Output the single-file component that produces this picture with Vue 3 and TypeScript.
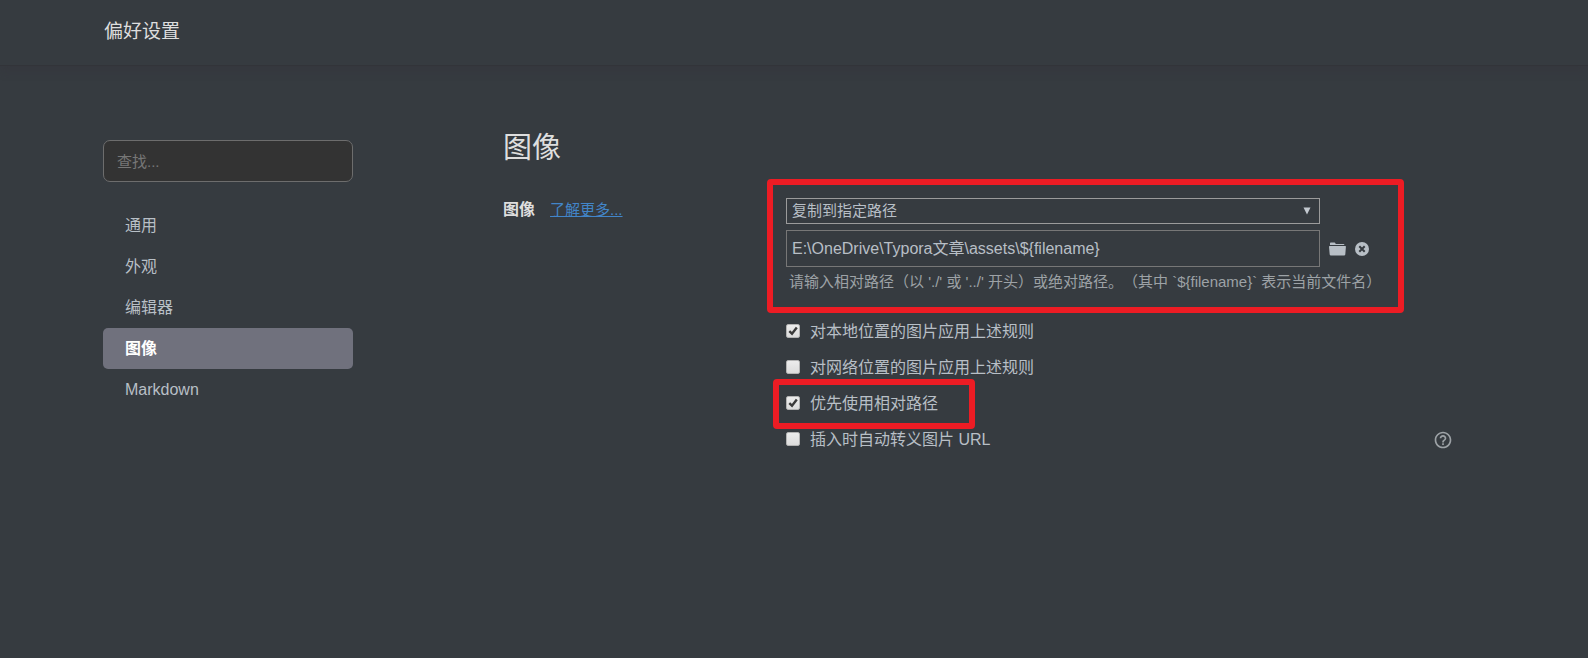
<script setup lang="ts">
import { ref } from 'vue'

interface Rule {
  id: string
  label: string
  checked: boolean
  marked?: boolean
  help?: boolean
}

const categories: string[] = ['通用', '外观', '编辑器', '图像', 'Markdown']
const active = ref('图像')
const query = ref('')
const action = ref('copy')
const path = ref('E:\\OneDrive\\Typora文章\\assets\\${filename}')
const rules = ref<Rule[]>([
  { id: 'local', label: '对本地位置的图片应用上述规则', checked: true },
  { id: 'online', label: '对网络位置的图片应用上述规则', checked: false },
  { id: 'relative', label: '优先使用相对路径', checked: true, marked: true },
  { id: 'escape', label: '插入时自动转义图片 URL', checked: false, help: true },
])
</script>

<template>
  <div class="page">
    <header class="top">偏好设置</header>
    <div class="body">
      <aside class="side">
        <input v-model="query" class="search" type="text" placeholder="查找..." aria-label="查找" />
        <nav class="nav">
          <a
            v-for="name in categories"
            :key="name"
            href="#"
            class="nav-item"
            :class="{ active: name === active }"
            @click.prevent="active = name"
          >{{ name }}</a>
        </nav>
      </aside>

      <main class="main">
        <h2 class="heading">图像</h2>
        <div class="setting">
          <div class="caption">
            <strong>图像</strong>
            <a href="#" class="more">了解更多...</a>
          </div>
          <div class="controls">
            <section class="target">
              <div class="select-wrap">
                <select v-model="action" class="select" aria-label="图像">
                  <option value="copy">复制到指定路径</option>
                </select>
                <svg class="arrow" viewBox="0 0 8 8" aria-hidden="true"><path d="M0.5 0.5h7L4 7.5z" /></svg>
              </div>
              <div class="path-row">
                <input v-model="path" class="path" type="text" aria-label="路径" aria-describedby="path-hint" />
                <button class="icon-btn" type="button" aria-label="选择文件夹">
                  <svg class="folder" viewBox="0 0 17 14" aria-hidden="true">
                    <path d="M1 3V1.2Q1 .4 1.8.4H5.5Q6.1.4 6.4 1.2L6.7 2H14.5Q15.4 2 15.4 3z" />
                    <path d="M.7 4H16.3Q17 4 16.9 4.8L16.3 12.6Q16.2 13.4 15.4 13.4H1.6Q.8 13.4.7 12.6L0 4.8Q0 4 .7 4z" />
                  </svg>
                </button>
                <button class="icon-btn" type="button" aria-label="清除" @click="path = ''">
                  <svg class="clear" viewBox="0 0 14 14" aria-hidden="true">
                    <circle cx="7" cy="7" r="7" />
                    <path d="M4.300 4.300l5.400 5.400M9.700 4.300l-5.400 5.400" />
                  </svg>
                </button>
              </div>
              <p id="path-hint" class="hint">请输入相对路径（以 './' 或 '../' 开头）或绝对路径。（其中 `${filename}` 表示当前文件名）</p>
            </section>

            <ul class="rules">
              <li v-for="rule in rules" :key="rule.id" class="rule" :class="{ marked: rule.marked }">
                <span class="box">
                  <input :id="rule.id" v-model="rule.checked" class="check" type="checkbox" />
                  <svg v-if="rule.checked" class="tick" viewBox="0 0 14 14" aria-hidden="true">
                    <path d="M3.3 7.2L6 9.7L10.8 3.6" />
                  </svg>
                </span>
                <label :for="rule.id">{{ rule.label }}</label>
                <button v-if="rule.help" class="help" type="button" aria-label="帮助">
                  <svg viewBox="0 0 24 24" aria-hidden="true">
                    <path d="M11 18h2v-2h-2v2zm1-16C6.480 2 2 6.480 2 12s4.480 10 10 10 10-4.480 10-10S17.520 2 12 2zm0 18c-4.410 0-8-3.590-8-8s3.590-8 8-8 8 3.590 8 8-3.590 8-8 8zm0-14c-2.210 0-4 1.790-4 4h2c0-1.100.9-2 2-2s2 .9 2 2c0 2-3 1.750-3 5h2c0-2.250 3-2.500 3-5 0-2.210-1.790-4-4-4z" />
                  </svg>
                </button>
              </li>
            </ul>
          </div>
        </div>
      </main>
    </div>
  </div>
</template>

<style>
body {
  margin: 0;
  background: #363b40;
}
</style>

<style scoped>
.page {
  min-height: 100vh;
  background: #363b40;
  color: #b8bfc6;
  font-family: "Liberation Sans", "Noto Sans CJK SC", sans-serif;
  font-size: 16px;
  line-height: 24px;
  text-spacing-trim: space-all;
}
.page *,
.page *::before {
  box-sizing: border-box;
}
input,
select,
button {
  margin: 0;
  font-family: inherit;
  color: inherit;
}
.top {
  height: 66px;
  padding: 20px 104px 0;
  border-bottom: 1px solid #323439;
  box-shadow: 0 4px 10px rgba(52, 48, 56, 0.3);
  color: #dedede;
  font-size: 19px;
}
.body {
  display: flex;
  gap: 150px;
  padding: 62px 135px 0 103px;
}
.side {
  flex: 0 0 250px;
  padding-top: 12px;
}
.search {
  display: block;
  width: 100%;
  height: 42px;
  padding: 0 13px;
  border: 1px solid #6d6d6d;
  border-radius: 7px;
  background: #333;
  font-size: 15px;
  outline: none;
}
.search::placeholder {
  color: #777;
  opacity: 1;
}
.nav {
  display: flex;
  flex-direction: column;
  margin-top: 23px;
}
.nav-item {
  height: 41px;
  padding: 0 22px;
  border-radius: 5px;
  line-height: 41px;
  color: inherit;
  text-decoration: none;
}
.nav-item.active {
  background: #70717d;
  color: #fff;
  font-weight: bold;
}
.main {
  flex: 1;
  min-width: 0;
}
.heading {
  margin: 0;
  color: #dedede;
  font-size: 29px;
  font-weight: normal;
  line-height: 40px;
}
.setting {
  display: flex;
  margin-top: 30px;
}
.caption {
  display: flex;
  gap: 15px;
  flex: 0 0 283px;
  color: #dedede;
}
.more {
  color: #4285c9;
  font-size: 15px;
}
.controls {
  flex: 1;
  min-width: 0;
}
.target {
  position: relative;
}
.target::before {
  content: "";
  position: absolute;
  inset: -19px 49px -19px -19px;
  border: 6px solid #ed1c24;
  border-radius: 4px;
  pointer-events: none;
}
.select-wrap {
  position: relative;
  width: 80%;
}
.select {
  display: block;
  width: 100%;
  height: 26px;
  padding: 0 5px 2px;
  border: 1px solid #9b9b9b;
  border-radius: 0;
  appearance: none;
  background: transparent;
  font-size: 15px;
}
.arrow {
  position: absolute;
  top: 9px;
  right: 9px;
  width: 8px;
  height: 8px;
  fill: #c3c9d0;
  pointer-events: none;
}
.path-row {
  display: flex;
  align-items: center;
  gap: 9px;
  margin-top: 6px;
}
.path {
  width: 80%;
  height: 37px;
  padding: 0 5px 3px;
  border: 1px solid #777;
  background: transparent;
  font-size: 16px;
  outline: none;
}
.icon-btn {
  display: flex;
  padding: 0;
  border: 0;
  background: none;
}
.folder {
  width: 17px;
  height: 14px;
  fill: #b8bfc6;
}
.clear {
  width: 14px;
  height: 14px;
  fill: #b8bfc6;
}
.clear path {
  stroke: #363b40;
  stroke-width: 2;
}
.hint {
  margin: 3px 0 0;
  padding: 0 3px;
  color: #9da2a6;
  font-size: 15px;
  white-space: nowrap;
}
.rules {
  margin: 20px 0 0;
  padding: 0;
  list-style: none;
}
.rule {
  position: relative;
  display: flex;
  align-items: center;
  gap: 10px;
  height: 36px;
}
.rule.marked::before {
  content: "";
  position: absolute;
  top: -7px;
  left: -13px;
  width: 202px;
  height: 50px;
  border: 6px solid #ed1c24;
  border-radius: 4px;
  pointer-events: none;
}
.box {
  position: relative;
  width: 14px;
  height: 14px;
  margin-bottom: 2px;
}
.check {
  display: block;
  width: 14px;
  height: 14px;
  border: 1px solid #b3b3b3;
  border-radius: 2px;
  appearance: none;
  background: linear-gradient(#ececec, #dcdcdc);
}
.tick {
  position: absolute;
  inset: 0;
  fill: none;
  stroke: #3a3a3a;
  stroke-width: 2.4;
  pointer-events: none;
}
.help {
  display: flex;
  margin-left: auto;
  padding: 0;
  border: 0;
  background: none;
}
.help svg {
  width: 20px;
  height: 20px;
  fill: #9da2a6;
}
</style>
